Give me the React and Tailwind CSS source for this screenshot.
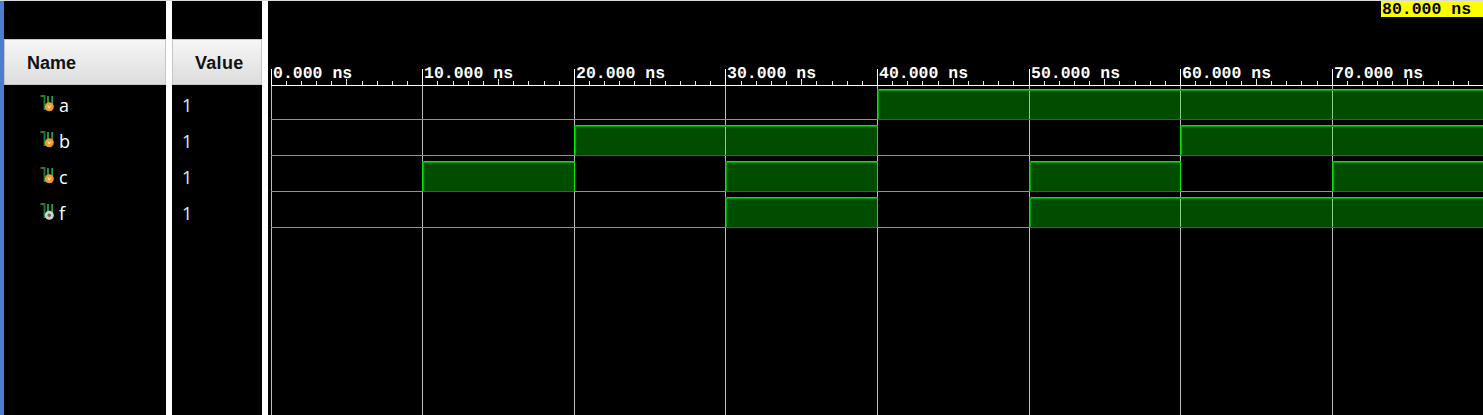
const signals = [
  { name: "a", bottom: 119, high: [[4, 8]] },
  { name: "b", bottom: 155, high: [[2, 4], [6, 8]] },
  { name: "c", bottom: 191, high: [[1, 2], [3, 4], [5, 6], [7, 8]] },
  { name: "f", bottom: 227, high: [[3, 4], [5, 8]] },
];

const gridX = (i) => Math.floor(271.2 + 151.57 * i);
const stops = [0, 1, 2, 3, 4, 5, 6, 7];
const minorTicks = Array.from({ length: 80 }, (_, i) => i);

function SignalIcon({ kind }) {
  return (
    <svg width="15" height="20" viewBox="0 0 15 20" className="shrink-0">
      <path d="M0.5 1h4v13h3.5" fill="none" stroke="#1d8038" strokeWidth="1.8" />
      <path d="M8 1v10M12.2 1v13" fill="none" stroke="#2f9a4c" strokeWidth="1.8" />
      {kind === "input" ? (
        <>
          <circle cx="9.3" cy="11.7" r="4.5" fill="#f39a2b" />
          <path d="M7.9 10.4l1.4 2.8 1.4-2.8" fill="none" stroke="#fff" strokeWidth="0.8" />
        </>
      ) : (
        <>
          <circle cx="9.3" cy="12.2" r="4.5" fill="#cfcfcf" />
          <circle cx="9.3" cy="12.2" r="1.7" fill="#666" />
        </>
      )}
    </svg>
  );
}

function Header({ label, className }) {
  return (
    <div className={`h-[46px] pt-[2px] flex items-center border border-[#c6c6c6] bg-gradient-to-b from-[#f6f6f6] to-[#dddddd] font-['Liberation_Sans',sans-serif] text-[18px] font-bold text-[#111] ${className}`}>
      {label}
    </div>
  );
}

function Wave({ signal }) {
  const bottom = signal.bottom;
  const top = bottom - 30;
  const end = 1483;
  const xs = (v) => (v === 8 ? end : gridX(v));
  const lows = [];
  let cursor = 0;
  signal.high.forEach(([a, b]) => {
    if (a > cursor) lows.push([cursor, a]);
    cursor = b;
  });
  if (cursor < 8) lows.push([cursor, 8]);

  return (
    <g>
      {lows.map(([a, b]) => (
        <rect key={a} x={xs(a)} y={bottom} width={xs(b) - xs(a)} height="1" fill="#22e022" />
      ))}
      {signal.high.map(([a, b]) => (
        <g key={a}>
          <rect x={xs(a)} y={top} width={xs(b) - xs(a)} height={30} fill="#00ff00" fillOpacity="0.3" />
          <rect x={xs(a)} y={top} width={xs(b) - xs(a)} height="1" fill="#00e800" />
          <rect x={xs(a)} y={top + 1} width={xs(b) - xs(a)} height="1" fill="#00a800" />
          <rect x={xs(a)} y={bottom} width={xs(b) - xs(a)} height="1" fill="#008a00" />
          <rect x={xs(a)} y={top} width="1" height={31} fill="#00e800" />
          <rect x={xs(a) + 1} y={top} width="1" height={30} fill="#00a800" />
          {b < 8 && <rect x={xs(b)} y={top} width="1" height={31} fill="#00e800" />}
        </g>
      ))}
    </g>
  );
}

export default function App() {
  return (
    <div className="h-[415px] w-[1483px] overflow-hidden bg-black flex flex-col font-['Open_Sans',sans-serif]">
      <div className="h-px bg-[#dcdcdc] shrink-0" />
      <div className="flex flex-1 min-h-0">
        <div className="w-1 bg-[#4a7fd0] shrink-0" />

        <div className="w-[162px] shrink-0 pt-[38px]">
          <Header label="Name" className="pl-[22px]" />
          <div className="pt-[2px]">
            {signals.map((s) => (
              <div key={s.name} className="h-9 flex items-center pl-[36px] gap-1 text-[18px] text-white">
                <SignalIcon kind={s.name === "f" ? "output" : "input"} />
                <span>{s.name}</span>
              </div>
            ))}
          </div>
        </div>

        <div className="w-[6px] bg-white shrink-0" />

        <div className="w-[90px] shrink-0 pt-[38px]">
          <Header label="Value" className="pl-[22px] tracking-[0.3px]" />
          <div className="pt-[2px]">
            {signals.map((s) => (
              <div key={s.name} className="h-9 flex items-center pl-[10px] text-[18px] text-[#d8ecff]">
                1
              </div>
            ))}
          </div>
        </div>

        <div className="w-[6px] bg-white shrink-0" />

        <div className="flex-1 min-w-0 pl-[3px] flex flex-col">
          <div className="h-4 flex justify-end shrink-0">
            <div className="w-[102px] bg-[#ffff00] pl-[1px] pt-px text-black font-['Liberation_Mono',monospace] font-bold text-[16.5px] leading-[15px] whitespace-pre">
              80.000 ns
            </div>
          </div>
          <svg viewBox="271 17 1212 398" width="1212" height="398" shapeRendering="crispEdges" className="block">
            {stops.map((i) => (
              <rect key={i} x={gridX(i)} y="85" width="1" height="330" fill="#bdbdbd" />
            ))}
            {signals.map((s) => (
              <Wave key={s.name} signal={s} />
            ))}

            <rect x="271" y="85" width="1212" height="1" fill="#ffffff" />
            {minorTicks.map((i) => {
              const x = Math.floor(271.2 + 15.157 * i);
              const tall = i % 5 === 0;
              const major = i % 10 === 0;
              if (major) return null;
              return <rect key={i} x={x} y={tall ? 79 : 81} width="1" height={tall ? 6 : 4} fill="#e8e8e8" />;
            })}
            {stops.map((i) => (
              <g key={i}>
                <rect x={gridX(i)} y="69" width="1" height="16" fill="#ffffff" />
                <text
                  x={gridX(i) + 2}
                  y="78"
                  fill="#ffffff"
                  textRendering="geometricPrecision"
                  className="font-['Liberation_Mono',monospace] font-bold text-[16.5px]"
                >
                  {i * 10}.000 ns
                </text>
              </g>
            ))}
          </svg>
        </div>
      </div>
    </div>
  );
}
